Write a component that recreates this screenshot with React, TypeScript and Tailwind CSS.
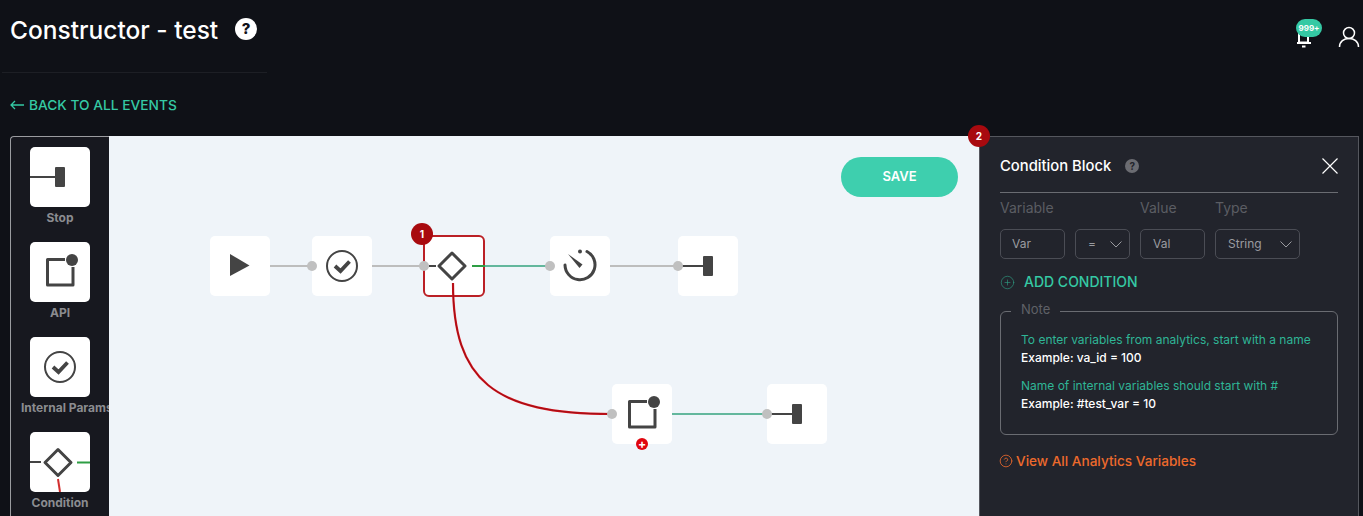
import { CircleHelp, CirclePlus } from 'lucide-react';
import type { ReactNode } from 'react';

const StopIcon = () => (
  <svg width="60" height="60" viewBox="0 0 60 60">
    <rect x="0" y="29" width="26" height="2" fill="#444" />
    <rect x="25" y="20" width="10" height="20" rx="1" fill="#444" />
  </svg>
);

const PlayIcon = () => (
  <svg width="60" height="60" viewBox="0 0 60 60">
    <path d="M20 18 L39.5 29.5 L20 40 Z" fill="#444" />
  </svg>
);

const CheckIcon = () => (
  <svg width="60" height="60" viewBox="0 0 60 60" fill="none">
    <circle cx="30" cy="30" r="15" stroke="#444" strokeWidth="2" />
    <path d="M23 30 L28.5 35 L37.5 25.5" stroke="#444" strokeWidth="3.8" />
  </svg>
);

const ApiIcon = () => (
  <svg width="60" height="60" viewBox="0 0 60 60" fill="none">
    <path d="M35 17.5 H17.5 V43 H43 V25" stroke="#444" strokeWidth="3" strokeLinejoin="round" />
    <circle cx="42" cy="18" r="6" fill="#444" />
  </svg>
);

const TimerIcon = () => (
  <svg width="60" height="60" viewBox="0 0 60 60" fill="none">
    <path d="M37 15.5 A15 15 0 1 1 15 29" stroke="#444" strokeWidth="3" strokeLinecap="round" />
    <circle cx="30" cy="15.5" r="2" fill="#444" />
    <path d="M18 18 L32.5 28.5 L29.5 32 Z" fill="#444" />
  </svg>
);

const ConditionTile = () => (
  <svg width="60" height="60" viewBox="0 0 60 60" fill="none">
    <path d="M0 30 H11" stroke="#444" strokeWidth="2" />
    <path d="M28 17.5 L41 30.5 L28 43.5 L15 30.5 Z" stroke="#444" strokeWidth="3" strokeLinejoin="round" />
    <path d="M47 30.5 H60" stroke="#2e9e44" strokeWidth="2" />
    <path d="M28 47 L30 60" stroke="#d32f2f" strokeWidth="2" />
  </svg>
);

const Chevron = () => (
  <svg width="12" height="7" viewBox="0 0 12 7" fill="none" stroke="#9a9ba0" strokeWidth="1">
    <path d="M0.5 0.5 L6 6 L11.5 0.5" />
  </svg>
);

const Tile = ({ label, labelClass = '', children }: { label: string; labelClass?: string; children: ReactNode }) => (
  <div className="flex flex-col items-center">
    <div className="h-[60px] w-[60px] shrink-0 overflow-hidden rounded-[5px] bg-white">{children}</div>
    <span className={`mt-[3px] whitespace-nowrap text-[12px] leading-[15px] font-bold text-[#8b8c90] ${labelClass}`}>{label}</span>
  </div>
);

// places on the free canvas, measured from the canvas corner
const CanvasNode = ({ className, children }: { className: string; children: ReactNode }) => (
  <div className={`absolute h-[60px] w-[60px] rounded-[5px] bg-white ${className}`}>{children}</div>
);

const Port = ({ className }: { className: string }) => (
  <span className={`absolute h-[10px] w-[10px] rounded-full bg-[#c0c0c0] ${className}`} />
);

const fieldBox = 'flex h-[30px] items-center rounded-[5px] border border-[#4b4d55] text-[12px] text-[#9a9ba0]';

export default function App() {
  return (
    <div className="flex h-screen w-full flex-col overflow-hidden bg-[#0f1117] font-['Inter',sans-serif]">
      <header className="relative h-[136px] shrink-0">
        <div className="ml-[2px] flex h-[73px] w-[265px] items-start gap-[17px] border-b border-[#1d1f25] pt-[15px] pl-[8px]">
          <h1 className="text-[24.5px] leading-[30px] font-medium whitespace-nowrap text-white">Constructor - test</h1>
          <span className="mt-[3px] flex h-[22px] w-[22px] shrink-0 items-center justify-center rounded-full bg-white text-[15px] font-extrabold text-[#0f1117]">?</span>
        </div>
        <a className="mt-[22px] flex items-center gap-[5px] pl-[10px] text-[13.75px] leading-[20px] font-medium text-[#35c9a4]">
          <svg width="14" height="10" viewBox="0 0 14 10" fill="none" stroke="currentColor" strokeWidth="1.3">
            <path d="M14 5 H1 M5 1 L1 5 L5 9" />
          </svg>
          BACK TO ALL EVENTS
        </a>
        <div className="absolute top-[27px] right-[50px] h-[21px] w-[18px]">
          <svg width="18" height="21" viewBox="0 0 18 21" fill="none" stroke="#fff" strokeWidth="2">
            <path d="M4 3 V15.5 H13 V3 M2 16 H16" />
            <path d="M7 19.5 H10.5" />
          </svg>
          <span className="absolute -top-[8px] left-[1px] flex h-[18px] w-[26px] items-center justify-center rounded-full bg-[#35c9a4] text-[8px] font-bold text-white">999+</span>
        </div>
        <svg className="absolute top-[26px] right-[3px]" width="22" height="22" viewBox="0 0 22 22" fill="none" stroke="#fff" strokeWidth="1.5">
          <circle cx="11" cy="7" r="5.5" />
          <path d="M1.5 21 C1.5 15.5 6 12.5 11 12.5 C16 12.5 20.5 15.5 20.5 21" />
        </svg>
      </header>

      <main className="flex min-h-0 flex-1 pr-[4px] pl-[10px]">
        <aside className="flex w-[99px] shrink-0 flex-col gap-[17px] overflow-hidden rounded-tl-[4px] border-t border-l border-[#9b9ca0] bg-[#17181f] pt-[10px]">
          <Tile label="Stop"><StopIcon /></Tile>
          <Tile label="API"><ApiIcon /></Tile>
          <Tile label="Internal Params" labelClass="ml-[10px] self-start"><CheckIcon /></Tile>
          <Tile label="Condition"><ConditionTile /></Tile>
        </aside>

        <section className="relative w-[870px] shrink-0 bg-[#eff4f9]">
          <svg className="absolute inset-0" width="870" height="380" fill="none">
            <path d="M161 130 H203 M263 130 H315 M501 130 H569" stroke="#bdbdbd" strokeWidth="2" />
            <path d="M375 130 H441 M563 278 H658" stroke="#63b79d" strokeWidth="2" />
          </svg>

          <CanvasNode className="top-[100px] left-[101px]"><PlayIcon /></CanvasNode>
          <CanvasNode className="top-[100px] left-[203px]"><CheckIcon /></CanvasNode>
          <CanvasNode className="top-[99px] left-[314px] !h-[62px] !w-[62px] !rounded-[6px] border-2 border-[#bb2026]">
            <svg className="absolute -top-[2px] -left-[2px]" width="62" height="62" viewBox="0 0 62 62" fill="none">
              <path d="M6 31 H13" stroke="#444" strokeWidth="2" />
              <path d="M29 18 L42 31 L29 44 L16 31 Z" stroke="#444" strokeWidth="3" strokeLinejoin="round" />
              <path d="M49 31 H62" stroke="#2e9e44" strokeWidth="2" />
            </svg>
          </CanvasNode>
          <CanvasNode className="top-[100px] left-[441px]"><TimerIcon /></CanvasNode>
          <CanvasNode className="top-[100px] left-[569px]"><StopIcon /></CanvasNode>
          <CanvasNode className="top-[248px] left-[503px]"><ApiIcon /></CanvasNode>
          <CanvasNode className="top-[248px] left-[658px]"><StopIcon /></CanvasNode>

          <svg className="pointer-events-none absolute inset-0" width="870" height="380" fill="none">
            <path d="M344 147 C344 245 385 278 503 278" stroke="#d7101a" strokeWidth="2.2" />
            <path d="M344 147 C344 245 385 278 503 278" stroke="#8a1015" strokeWidth="0.8" />
          </svg>

          <Port className="top-[125px] left-[198px]" />
          <Port className="top-[125px] left-[310px]" />
          <Port className="top-[125px] left-[436px]" />
          <Port className="top-[125px] left-[564px]" />
          <Port className="top-[273px] left-[498px]" />
          <Port className="top-[273px] left-[653px]" />

          <span className="absolute top-[87px] left-[302px] flex h-[22px] w-[22px] items-center justify-center rounded-full bg-[#a80a0f] text-[10px] font-bold text-white">1</span>
          <span className="absolute top-[302px] left-[527px] flex h-[12px] w-[12px] items-center justify-center rounded-full bg-[#e0060f] text-[12px] leading-none font-bold text-white">+</span>

          <button className="absolute top-[21px] left-[732px] h-[40px] w-[117px] rounded-[20px] bg-[#3ecfae] text-[13px] font-semibold text-white">SAVE</button>
          <span className="absolute -top-[11px] right-[-11px] z-10 flex h-[22px] w-[22px] items-center justify-center rounded-full bg-[#a80a0f] text-[10px] font-bold text-white">2</span>
        </section>

        <aside className="flex w-[380px] shrink-0 flex-col border-t border-r border-l border-[#55575e] bg-[#22242c] px-[20px]">
          <div className="flex h-[56px] shrink-0 items-center justify-between border-b border-[#6a6c72] pt-[3px]">
            <div className="flex items-center gap-[14px] text-[14.8px] font-medium text-white">
              Condition Block
              <span className="flex h-[14px] w-[14px] items-center justify-center rounded-full bg-[#6b6c72] text-[10px] font-bold text-[#22242c]">?</span>
            </div>
            <svg width="16" height="16" viewBox="0 0 16 16" fill="none" stroke="#fff" strokeWidth="1.2">
              <path d="M0.5 0.5 L15.5 15.5 M15.5 0.5 L0.5 15.5" />
            </svg>
          </div>

          <div className="mt-[6px] flex text-[14px] leading-[18px] text-[#5b5d63]">
            <span className="w-[140px]">Variable</span>
            <span className="w-[75px]">Value</span>
            <span>Type</span>
          </div>

          <div className="mt-[12px] flex text-[12px]">
            <div className={`${fieldBox} w-[65px] pl-[11px]`}>Var</div>
            <div className={`${fieldBox} ml-[10px] w-[55px] justify-between pr-[7px] pl-[12px]`}>
              =
              <Chevron />
            </div>
            <div className={`${fieldBox} ml-[10px] w-[65px] pl-[12px]`}>Val</div>
            <div className={`${fieldBox} ml-[10px] w-[85px] justify-between pr-[7px] pl-[12px]`}>
              String
              <Chevron />
            </div>
          </div>

          <div className="mt-[13px] flex items-center gap-[9px] text-[14px] leading-[20px] font-medium text-[#35c9a4]">
            <CirclePlus size={15} strokeWidth={1} className="text-[#2e9f83]" />
            ADD CONDITION
          </div>

          <div className="relative mt-[19px] h-[124px] rounded-[6px] border border-[#6a6c72] pt-[19px] pl-[20px] text-[12px] leading-[18px] font-medium">
            <span className="absolute -top-[11px] left-[10px] bg-[#22242c] px-[10px] text-[13px] leading-[16px] font-normal text-[#5f6167]">Note</span>
            <p className="font-normal text-[#2fb596]">To enter variables from analytics, start with a name</p>
            <p className="text-white">Example: va_id = 100</p>
            <p className="mt-[10px] font-normal text-[#2fb596]">Name of internal variables should start with #</p>
            <p className="text-white">Example: #test_var = 10</p>
          </div>

          <div className="mt-[16px] flex items-center gap-[3px] text-[13.6px] leading-[20px] font-medium text-[#ed6a2c]">
            <CircleHelp size={14} strokeWidth={1.4} className="-ml-[1px]" />
            View All Analytics Variables
          </div>
        </aside>
      </main>
    </div>
  );
}
